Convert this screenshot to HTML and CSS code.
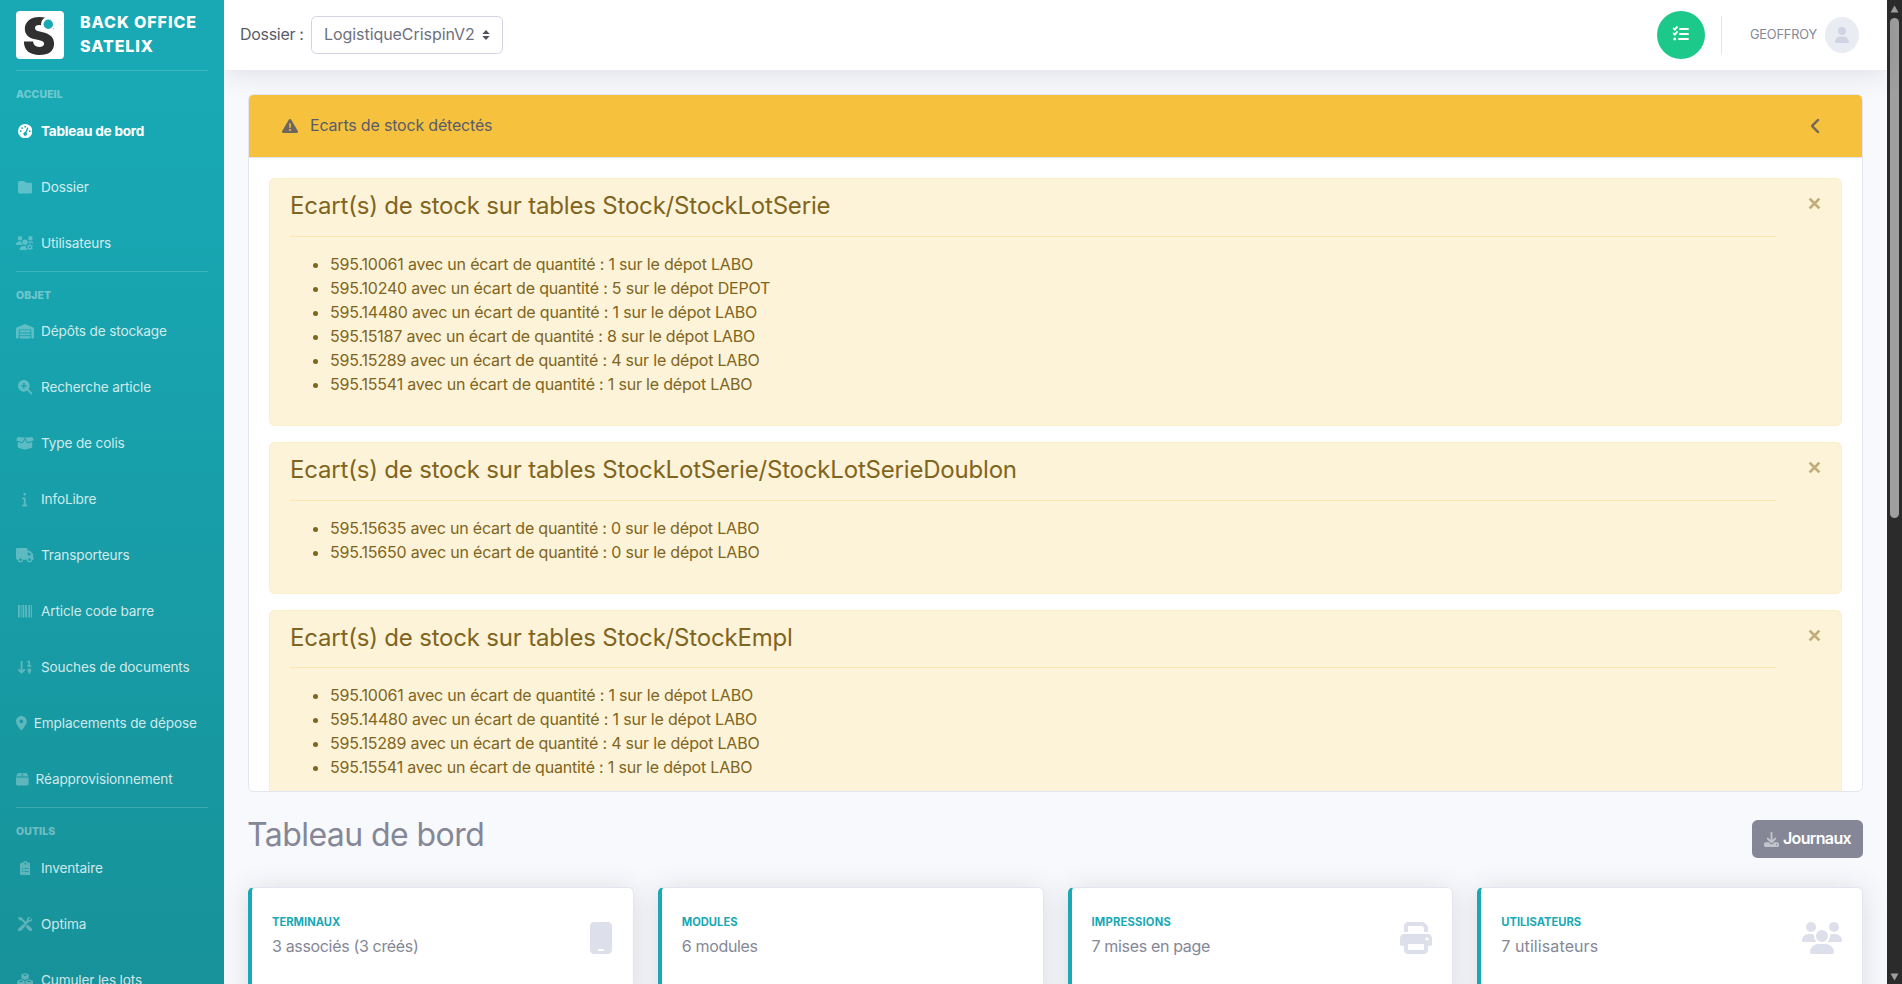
FILE: index.html
```
<!DOCTYPE html>
<html lang="fr">
<head>
<meta charset="utf-8">
<title>Back Office Satelix</title>
<link rel="stylesheet" href="styles.css">
</head>
<body>
<div class="app">
  <nav class="sidebar">
    <a class="brand">
      <svg class="brand-logo" viewBox="0 0 48 48"><rect width="48" height="48" rx="4" fill="#fff"/><text class="logo-letter" x="23" y="43" text-anchor="middle" textLength="33" lengthAdjust="spacingAndGlyphs">S</text><circle cx="32" cy="13" r="7" fill="#fff"/><circle cx="32.3" cy="13.3" r="4.7" fill="#18a9b5"/></svg>
      <span class="brand-text">BACK OFFICE<br>SATELIX</span>
    </a>
    <hr>
    <div class="side-heading">ACCUEIL</div>
    <a class="side-link active"><span class="ico"><svg viewBox="0 0 512 512"><path fill-rule="evenodd" d="M256 0a256 256 0 1 1 0 512A256 256 0 1 1 256 0zM288 96a32 32 0 1 0-64 0 32 32 0 1 0 64 0zM256 416c35.300 0 64-28.700 64-64 0-17.400-6.900-33.100-18.100-44.600L366 161.700c5.300-12.100-.2-26.300-12.300-31.600s-26.300.2-31.600 12.300L257.900 288H256c-35.300 0-64 28.700-64 64s28.700 64 64 64zM176 144a32 32 0 1 0-64 0 32 32 0 1 0 64 0zM96 288a32 32 0 1 0 0-64 32 32 0 1 0 0 64zM448 256a32 32 0 1 0-64 0 32 32 0 1 0 64 0z"/></svg></span>Tableau de bord</a>
    <a class="side-link"><span class="ico"><svg viewBox="0 0 512 512"><path d="M64 480H448c35.300 0 64-28.700 64-64V160c0-35.300-28.700-64-64-64H288c-10.100 0-19.600-4.700-25.600-12.800L243.200 57.600C231.100 41.500 212.100 32 192 32H64C28.700 32 0 60.700 0 96V416c0 35.300 28.700 64 64 64z"/></svg></span>Dossier</a>
    <a class="side-link"><span class="ico"><svg viewBox="0 0 640 512"><path fill-rule="evenodd" d="M144 0a80 80 0 1 1 0 160A80 80 0 1 1 144 0zM512 0a80 80 0 1 1 0 160A80 80 0 1 1 512 0zM0 298.700C0 239.800 47.800 192 106.700 192h42.700c15.900 0 31 3.500 44.600 9.700-1.300 7.200-1.900 14.700-1.900 22.300 0 38.200 16.800 72.500 43.300 96H21.300C9.600 320 0 310.400 0 298.700zM224 224a96 96 0 1 1 192 0 96 96 0 1 1-192 0zM128 485.300C128 411.700 187.700 352 261.300 352H360c-8 60 10 120 58 160H154.700c-14.700 0-26.700-11.900-26.700-26.700zM448 201c14-6 27-9 42.600-9h42.700c48 0 88 31 101.700 74l-35-14-30 14-24-26h-50l-16 30-32-4zM478 288h36l10 36 22 12 36-10 18 32-26 27v26l26 27-18 32-36-10-22 12-10 34h-36l-10-34-22-12-36 10-18-32 26-27v-26l-26-27 18-32 36 10 22-12zM496 358a40 40 0 1 0 0 80 40 40 0 1 0 0-80z"/></svg></span>Utilisateurs</a>
    <hr>
    <div class="side-heading">OBJET</div>
    <a class="side-link"><span class="ico"><svg viewBox="0 0 640 512"><path d="M0 488V171.300c0-26.200 15.900-49.700 40.200-59.400L308.100 4.800c7.600-3.100 16.100-3.100 23.800 0L599.800 111.900c24.300 9.700 40.200 33.300 40.200 59.400V488c0 13.300-10.700 24-24 24H568c-13.300 0-24-10.700-24-24V224c0-17.700-14.300-32-32-32H128c-17.700 0-32 14.300-32 32V488c0 13.300-10.700 24-24 24H24c-13.300 0-24-10.700-24-24zm488 24H152c-13.300 0-24-10.700-24-24V432H512v56c0 13.300-10.700 24-24 24zM128 400V336H512v64H128zm0-96V224H512v80H128z"/></svg></span>Dépôts de stockage</a>
    <a class="side-link"><span class="ico"><svg viewBox="0 0 512 512"><path fill-rule="evenodd" d="M416 208c0 45.900-14.900 88.300-40 122.700L502.600 457.400c12.500 12.500 12.500 32.800 0 45.300s-32.800 12.500-45.300 0L330.700 376c-34.400 25.200-76.800 40-122.700 40C93.100 416 0 322.900 0 208S93.100 0 208 0S416 93.100 416 208zM184 296c0 13.300 10.700 24 24 24s24-10.700 24-24V232h64c13.300 0 24-10.700 24-24s-10.700-24-24-24H232V120c0-13.300-10.700-24-24-24s-24 10.700-24 24v64H120c-13.300 0-24 10.700-24 24s10.700 24 24 24h64v64z"/></svg></span>Recherche article</a>
    <a class="side-link"><span class="ico"><svg viewBox="0 0 640 512"><path d="M58.900 42.100c3-6.100 9.600-9.600 16.300-8.700L320 64 564.800 33.400c6.700-.8 13.300 2.700 16.300 8.700l41.700 83.400c9 17.900-.6 39.600-19.800 45.100L439.600 217.300c-13.900 4-28.800-1.900-36.200-14.300L320 64 236.600 203c-7.400 12.400-22.300 18.300-36.200 14.300L37.100 170.600c-19.300-5.500-28.800-27.200-19.800-45.100L58.900 42.100zM321.100 128l54.900 91.400c14.900 24.800 44.600 36.600 72.500 28.600L576 211.600v167c0 22-15 41.200-36.400 46.600l-204.100 51c-10.200 2.600-20.900 2.600-31 0l-204.100-51C79 419.700 64 400.500 64 378.500v-167L191.600 248c27.800 8 57.600-3.800 72.500-28.600L318.900 128h2.200z"/></svg></span>Type de colis</a>
    <a class="side-link"><span class="ico"><svg viewBox="0 0 192 512"><path d="M48 80a48 48 0 1 1 96 0A48 48 0 1 1 48 80zM0 224c0-17.700 14.300-32 32-32H96c17.700 0 32 14.300 32 32V448h32c17.700 0 32 14.300 32 32s-14.300 32-32 32H32c-17.700 0-32-14.300-32-32s14.300-32 32-32H64V256H32c-17.700 0-32-14.300-32-32z"/></svg></span>InfoLibre</a>
    <a class="side-link"><span class="ico"><svg viewBox="0 0 640 512"><path fill-rule="evenodd" d="M48 0C21.500 0 0 21.500 0 48V368c0 26.500 21.500 48 48 48H64c0 53 43 96 96 96s96-43 96-96H384c0 53 43 96 96 96s96-43 96-96h32c17.700 0 32-14.300 32-32s-14.300-32-32-32V237.300c0-17-6.700-33.300-18.700-45.300L512 114.700c-12-12-28.300-18.700-45.300-18.700H416V48c0-26.500-21.500-48-48-48H48zM416 160h50.700L544 237.300V256H416V160zM112 416a48 48 0 1 1 96 0 48 48 0 1 1-96 0zm368-48a48 48 0 1 1 0 96 48 48 0 1 1 0-96z"/></svg></span>Transporteurs</a>
    <a class="side-link"><span class="ico"><svg viewBox="0 0 512 512"><path d="M0 32h64v448H0zM96 32h32v448H96zM160 32h64v448h-64zM256 32h64v448h-64zM368 32h64v448h-64zM464 32h48v448h-48z"/></svg></span>Article code barre</a>
    <a class="side-link"><span class="ico"><svg viewBox="0 0 512 512"><path class="stroke" d="M128 60V440M34 350l94 98 94-98"/><path class="stroke thin" d="M360 60h40v150M352 210h96M445 365a42 42 0 1 1-84 0a42 42 0 1 1 84 0c0 40-18 70-50 98"/></svg></span>Souches de documents</a>
    <a class="side-link"><span class="ico tight"><svg viewBox="0 0 384 512"><path fill-rule="evenodd" d="M215.700 499.200C267 435 384 279.400 384 192C384 86 298 0 192 0S0 86 0 192c0 87.400 117 243 168.300 307.200c12.300 15.300 35.100 15.300 47.400 0zM192 128a64 64 0 1 1 0 128 64 64 0 1 1 0-128z"/></svg></span>Emplacements de dépose</a>
    <a class="side-link"><span class="ico tight"><svg viewBox="0 0 448 512"><path d="M50.700 58.500L0 160H208V32H93.700C75.500 32 58.900 42.300 50.700 58.500zM240 160H448L397.300 58.500C389.100 42.300 372.500 32 354.300 32H240V160zm208 32H0V416c0 35.300 28.700 64 64 64H384c35.300 0 64-28.700 64-64V192z"/></svg></span>Réapprovisionnement</a>
    <hr>
    <div class="side-heading">OUTILS</div>
    <a class="side-link"><span class="ico"><svg viewBox="0 0 384 512"><path fill-rule="evenodd" d="M192 0c-41.800 0-77.400 26.700-90.500 64H64C28.700 64 0 92.700 0 128V448c0 35.300 28.700 64 64 64H320c35.300 0 64-28.700 64-64V128c0-35.300-28.700-64-64-64H282.500C269.400 26.700 233.800 0 192 0zm0 64a32 32 0 1 1 0 64 32 32 0 1 1 0-64zM72 272a24 24 0 1 1 48 0 24 24 0 1 1-48 0zm88-16H304v32H160zM72 368a24 24 0 1 1 48 0 24 24 0 1 1-48 0zm88-16H304v32H160z"/></svg></span>Inventaire</a>
    <a class="side-link"><span class="ico"><svg viewBox="0 0 512 512"><path d="M20 5L5 20q-10 10 0 25l55 75q6 8 16 8h55l100 100-38 38q-25-5-45 15L20 410q-40 45 0 82t82 0l130-130q18-18 15-45L400 160q55 15 90-30 28-38 18-83-3-10-12-2l-62 62h-50V60l62-60q4-8-8-8-60-5-96 35-30 35-20 80l-48 55L160 60V40q0-8-8-14L76 3Q68-3 60 5zM312 290l-38 38q-6 28 14 48l112 116q38 36 82 0 45-40 10-85L375 295q-32-24-63-5z"/></svg></span>Optima</a>
    <a class="side-link"><span class="ico"><svg viewBox="0 0 576 512"><path fill-rule="evenodd" d="M288 0l118 45q14 6 14 22v110q0 14-14 20l-118 52-118-52q-14-6-14-20V67q0-16 14-22zM288 42l-78 30 78 32 78-32zM144 225l118 52q14 6 14 20v120q0 16-14 22l-118 55-126-55q-14-6-14-22V297q0-14 14-20zM432 225l126 52q14 6 14 20v120q0 16-14 22l-126 55-118-55q-14-6-14-22V297q0-14 14-20zM144 268l-78 32 78 32 78-32zM432 268l-78 32 78 32 78-32z"/></svg></span>Cumuler les lots</a>
  </nav>

  <div class="content">
    <header class="topbar">
      <label class="folder-label">Dossier :</label>
      <div class="select"><span>LogistiqueCrispinV2</span><svg viewBox="0 0 8 10"><path d="M4 0L0.300 4h7.400zM4 10L.3 6h7.400z" fill="#4f5160"/></svg></div>
      <div class="spacer"></div>
      <div class="tasks"><svg viewBox="0 0 512 512"><path class="stroke" d="M24 80l36 36 68-84M24 240l36 36 68-84M224 96H480M224 256H480M192 416H480"/><circle cx="56" cy="416" r="46"/></svg></div>
      <div class="topbar-divider"></div>
      <span class="user-name">GEOFFROY</span>
      <div class="avatar"><svg viewBox="0 0 448 512"><path d="M224 256A128 128 0 1 0 224 0a128 128 0 1 0 0 256zm-45.700 48C79.800 304 0 383.800 0 482.300C0 498.700 13.300 512 29.700 512H418.300c16.400 0 29.700-13.300 29.700-29.700C448 383.800 368.200 304 269.700 304H178.300z"/></svg></div>
    </header>

    <main class="main">
      <section class="panel">
        <div class="panel-head">
          <svg class="warn" viewBox="0 0 512 512"><path fill-rule="evenodd" d="M256 32c14.200 0 27.300 7.500 34.500 19.800l216 368c7.300 12.400 7.300 27.700.2 40.100S486.300 480 472 480H40c-14.300 0-27.600-7.700-34.700-20.100s-7-27.800.2-40.100l216-368C228.700 39.500 241.800 32 256 32zm0 128c-13.300 0-24 10.700-24 24V296c0 13.300 10.700 24 24 24s24-10.700 24-24V184c0-13.300-10.700-24-24-24zm32 224a32 32 0 1 0-64 0 32 32 0 1 0 64 0z"/></svg>
          <span class="panel-title">Ecarts de stock détectés</span>
          <svg class="chevron" viewBox="0 0 320 512"><path d="M9.400 233.400c-12.500 12.500-12.500 32.800 0 45.300l192 192c12.500 12.500 32.800 12.500 45.300 0s12.500-32.800 0-45.300L77.300 256 246.600 86.600c12.500-12.500 12.500-32.800 0-45.300s-32.800-12.500-45.300 0l-192 192z"/></svg>
        </div>
        <div class="panel-body">
          <div class="alert">
            <svg class="close" viewBox="0 0 12 12"><path d="M1.500 1.500l9 9M10.500 1.500l-9 9"/></svg>
            <h4>Ecart(s) de stock sur tables Stock/StockLotSerie</h4>
            <hr>
            <ul>
              <li>595.10061 avec un écart de quantité : 1 sur le dépot LABO</li>
              <li>595.10240 avec un écart de quantité : 5 sur le dépot DEPOT</li>
              <li>595.14480 avec un écart de quantité : 1 sur le dépot LABO</li>
              <li>595.15187 avec un écart de quantité : 8 sur le dépot LABO</li>
              <li>595.15289 avec un écart de quantité : 4 sur le dépot LABO</li>
              <li>595.15541 avec un écart de quantité : 1 sur le dépot LABO</li>
            </ul>
          </div>
          <div class="alert">
            <svg class="close" viewBox="0 0 12 12"><path d="M1.500 1.500l9 9M10.500 1.500l-9 9"/></svg>
            <h4>Ecart(s) de stock sur tables StockLotSerie/StockLotSerieDoublon</h4>
            <hr>
            <ul>
              <li>595.15635 avec un écart de quantité : 0 sur le dépot LABO</li>
              <li>595.15650 avec un écart de quantité : 0 sur le dépot LABO</li>
            </ul>
          </div>
          <div class="alert">
            <svg class="close" viewBox="0 0 12 12"><path d="M1.500 1.500l9 9M10.500 1.500l-9 9"/></svg>
            <h4>Ecart(s) de stock sur tables Stock/StockEmpl</h4>
            <hr>
            <ul>
              <li>595.10061 avec un écart de quantité : 1 sur le dépot LABO</li>
              <li>595.14480 avec un écart de quantité : 1 sur le dépot LABO</li>
              <li>595.15289 avec un écart de quantité : 4 sur le dépot LABO</li>
              <li>595.15541 avec un écart de quantité : 1 sur le dépot LABO</li>
            </ul>
          </div>
        </div>
      </section>

      <div class="page-head">
        <h1>Tableau de bord</h1>
        <a class="btn"><svg viewBox="0 0 512 512"><path fill-rule="evenodd" d="M288 32c0-17.700-14.300-32-32-32s-32 14.300-32 32V274.700l-73.400-73.400c-12.500-12.500-32.800-12.500-45.300 0s-12.500 32.800 0 45.300l128 128c12.500 12.500 32.800 12.500 45.300 0l128-128c12.500-12.500 12.500-32.800 0-45.300s-32.800-12.500-45.300 0L288 274.700V32zM64 352c-35.300 0-64 28.700-64 64v32c0 35.300 28.700 64 64 64H448c35.300 0 64-28.700 64-64V416c0-35.300-28.700-64-64-64H346.500l-45.300 45.300c-25 25-65.500 25-90.500 0L165.500 352H64zm368 56a24 24 0 1 1 0 48 24 24 0 1 1 0-48z"/></svg><span>Journaux</span></a>
      </div>

      <div class="cards">
        <div class="card"><div><div class="card-label">TERMINAUX</div><div class="card-value">3 associés (3 créés)</div></div><svg viewBox="0 0 384 512"><path fill-rule="evenodd" d="M80 0C44.700 0 16 28.700 16 64V448c0 35.300 28.700 64 64 64H304c35.300 0 64-28.700 64-64V64c0-35.300-28.700-64-64-64H80zm80 432h64c8.800 0 16 7.200 16 16s-7.200 16-16 16H160c-8.800 0-16-7.200-16-16s7.200-16 16-16z"/></svg></div>
        <div class="card"><div><div class="card-label">MODULES</div><div class="card-value">6 modules</div></div></div>
        <div class="card"><div><div class="card-label wide">IMPRESSIONS</div><div class="card-value">7 mises en page</div></div><svg viewBox="0 0 512 512"><path fill-rule="evenodd" d="M128 0C92.700 0 64 28.700 64 64v96h64V64H354.700L384 93.300V160h64V93.300c0-17-6.700-33.300-18.700-45.300L400 18.700C388 6.700 371.700 0 354.700 0H128zM384 352v96H128V352H384zm64 32h32c17.700 0 32-14.300 32-32V256c0-35.300-28.700-64-64-64H64c-35.300 0-64 28.700-64 64v96c0 17.700 14.300 32 32 32H64v64c0 35.300 28.700 64 64 64H384c35.300 0 64-28.700 64-64V384zM432 248a24 24 0 1 1 0 48 24 24 0 1 1 0-48z"/></svg></div>
        <div class="card"><div><div class="card-label">UTILISATEURS</div><div class="card-value wide">7 utilisateurs</div></div><svg viewBox="0 0 640 512"><path d="M144 0a80 80 0 1 1 0 160A80 80 0 1 1 144 0zM512 0a80 80 0 1 1 0 160A80 80 0 1 1 512 0zM0 298.700C0 239.800 47.800 192 106.700 192h42.700c15.900 0 31 3.500 44.600 9.700-1.300 7.200-1.900 14.700-1.900 22.300 0 38.200 16.800 72.500 43.300 96H21.300C9.600 320 0 310.400 0 298.700zM405.300 320h-.7c26.600-23.500 43.300-57.800 43.300-96 0-7.600-.7-15-1.900-22.300 13.600-6.300 28.700-9.700 44.600-9.700h42.700C592.200 192 640 239.800 640 298.700c0 11.800-9.600 21.300-21.300 21.300H405.300zM224 224a96 96 0 1 1 192 0 96 96 0 1 1-192 0zM128 485.300C128 411.700 187.700 352 261.300 352H378.700C452.300 352 512 411.700 512 485.300c0 14.700-11.900 26.700-26.700 26.700H154.700c-14.700 0-26.700-11.900-26.700-26.700z"/></svg></div>
      </div>
    </main>
  </div>

  <div class="scrollbar">
    <svg class="sb-arrow" viewBox="0 0 9 8"><path d="M4.500 .5L8.500 7.500h-8z"/></svg>
    <div class="sb-thumb"></div>
    <div class="spacer"></div>
    <svg class="sb-arrow" viewBox="0 0 9 8"><path d="M4.500 7.500L.5 .5h8z"/></svg>
  </div>
</div>
</body>
</html>
```
FILE: styles.css
```
* { box-sizing: border-box; }
body {
  margin: 0;
  height: 984px;
  overflow: hidden;
  font-family: Inter, "Liberation Sans", sans-serif;
  font-size: 16px;
  line-height: 1.5;
  letter-spacing: -0.19px;
  color: #858796;
  background: #f8f9fd;
}
h1, h4 { margin: 0; font-weight: 400; line-height: 1.2; }
.spacer { flex: 1; }
.app { display: flex; height: 984px; overflow: hidden; }

.sidebar {
  position: relative;
  z-index: 1;
  width: 224px;
  flex: none;
  height: 984px;
  overflow: hidden;
  background: linear-gradient(180deg, #18a9b5 10%, #17929a 100%);
  color: #fff;
}
.brand { display: flex; gap: 16px; height: 70px; padding: 11px 16px; }
.brand-logo { width: 48px; height: 48px; overflow: visible; }
.logo-letter { font: 900 50px Inter, sans-serif; letter-spacing: 0; fill: #303030; }
.brand-text { font-size: 16px; font-weight: 800; line-height: 24px; letter-spacing: .92px; margin-top: -1px; }
.sidebar hr { margin: 0 16px 15.8px; border: 0; border-top: 1px solid rgba(255, 255, 255, .17); }
.sidebar hr:first-of-type { margin-bottom: 16.4px; }
.side-heading {
  height: 15.6px;
  padding: 0 16px;
  font-size: 10.4px;
  font-weight: 800;
  line-height: 15.6px;
  letter-spacing: .15px;
  color: rgba(255, 255, 255, .4);
}
.side-link {
  display: flex;
  align-items: center;
  height: 56px;
  padding: 0 16px;
  font-size: 13.6px;
  letter-spacing: -.14px;
  white-space: nowrap;
  color: rgba(255, 255, 255, .8);
}
.ico { display: flex; justify-content: center; width: 18px; margin-right: 7px; }
.ico.tight { width: auto; }
.ico svg { height: 14.4px; fill: rgba(255, 255, 255, .3); stroke: rgba(255, 255, 255, .3); stroke-width: 0; }
.ico .stroke { fill: none; stroke-width: 66; stroke-linecap: round; stroke-linejoin: round; }
.ico .thin { stroke-width: 58; }
.active { font-weight: 700; letter-spacing: -.23px; color: #fff; }
.active .ico svg { fill: #fff; }

.content { flex: 1; min-width: 0; }
.topbar {
  position: relative;
  display: flex;
  align-items: center;
  height: 70px;
  padding: 0 28px 0 16px;
  background: #fff;
  box-shadow: 0 2.4px 28px rgba(58, 59, 69, .15);
}
.folder-label { width: 71px; padding-bottom: 2px; letter-spacing: -.3px; color: #5a5c69; white-space: nowrap; }
.select {
  display: flex;
  align-items: center;
  justify-content: space-between;
  width: 192px;
  height: 38px;
  padding: 0 12px;
  border: 1px solid #d1d3e2;
  border-radius: 5.6px;
  color: #6e707e;
}
.select span { padding-bottom: 2px; letter-spacing: -.06px; }
.select svg { width: 8px; height: 10px; }
.tasks { display: flex; align-items: center; justify-content: center; width: 48px; height: 48px; border-radius: 50%; background: #1cc88a; }
.tasks svg { width: 16px; height: 16px; fill: #fff; overflow: visible; transform: translateY(-1px); }
.tasks .stroke { fill: none; stroke: #fff; stroke-width: 62; stroke-linecap: round; stroke-linejoin: round; }
.topbar-divider { width: 1px; height: 38px; margin: 0 28px 0 16px; background: #e3e6f0; }
.user-name { width: 75px; font-size: 12.8px; }
.avatar { display: flex; align-items: center; justify-content: center; width: 34px; height: 36px; border-radius: 50%; background: #eaecf4; }
.avatar svg { height: 16px; fill: #d1d3e2; }

.main { padding: 24px 24px 0; }
.panel {
  display: flex;
  flex-direction: column;
  height: 698px;
  overflow: hidden;
  border: 1px solid #e3e6f0;
  border-radius: 5.6px;
  background: #fff;
}
.panel-head {
  display: flex;
  flex: none;
  align-items: center;
  height: 63px;
  padding: 0 41px 0 33px;
  border-bottom: 1px solid #e3e6f0;
  background: #f6c23e;
  color: #5a5c69;
}
.panel-title { padding-bottom: 2px; }
.warn { width: 16px; height: 16px; margin: -1px 12px 0 0; fill: #6c665f; }
.chevron { height: 16px; margin-left: auto; fill: #6c665f; stroke: #6c665f; stroke-width: 14; }
.panel-body { flex: 1; min-height: 0; overflow: hidden; padding: 20px; }
.alert {
  position: relative;
  margin-bottom: 16px;
  padding: 12px 65px 12px 20px;
  border: 1px solid #fceec9;
  border-radius: 5.6px;
  background: #fdf3d8;
  color: #806520;
}
.alert h4 { padding-top: 1px; font-size: 24px; }
.alert hr { margin: 15px 0; border: 0; border-top: 1px solid #fce7b1; }
.alert ul { margin: 0 0 17px; padding-left: 40px; }
.close { position: absolute; top: 18px; right: 20px; width: 13px; height: 13px; fill: none; stroke: #bfac78; stroke-width: 2.600; }

.page-head { display: flex; justify-content: space-between; height: 95px; padding-top: 28px; }
h1 { font-size: 32px; margin: -4px 0 0 -1px; letter-spacing: -.56px; }
.btn {
  display: flex;
  align-items: center;
  justify-content: center;
  gap: 4px;
  width: 111px;
  height: 38px;
  border-radius: 5.6px;
  background: #858796;
  color: #fff;
  font-weight: 600;
  letter-spacing: -.65px;
}
.btn span { padding-bottom: 2px; }
.btn svg { width: 15px; height: 15px; fill: rgba(255, 255, 255, .5); }

.cards { display: grid; grid-template-columns: repeat(4, 1fr); gap: 24px; }
.card {
  display: flex;
  justify-content: space-between;
  height: 120px;
  padding: 26px 20px 25px;
  border: 1px solid #e3e6f0;
  border-left: 4px solid #18a9b5;
  border-radius: 5.6px;
  background: #fff;
  box-shadow: 0 2.4px 28px rgba(58, 59, 69, .15);
}
.card-label { font-size: 11.2px; font-weight: 700; line-height: 17px; letter-spacing: 0; margin-bottom: 3px; color: #18a9b5; }
.card-label.wide { letter-spacing: .2px; }
.card-value { letter-spacing: -.34px; }
.card-value.wide { letter-spacing: .1px; }
.card svg { height: 32px; margin-top: 8px; fill: #dddfeb; }

.scrollbar { display: flex; flex-direction: column; align-items: center; width: 15px; flex: none; padding: 5px 0 3px; background: #2b2b2b; }
.sb-arrow { width: 9px; height: 8px; fill: #9f9f9f; }
.sb-thumb { width: 9px; height: 500px; margin-top: 5px; border-radius: 5px; background: #9f9f9f; }
```
